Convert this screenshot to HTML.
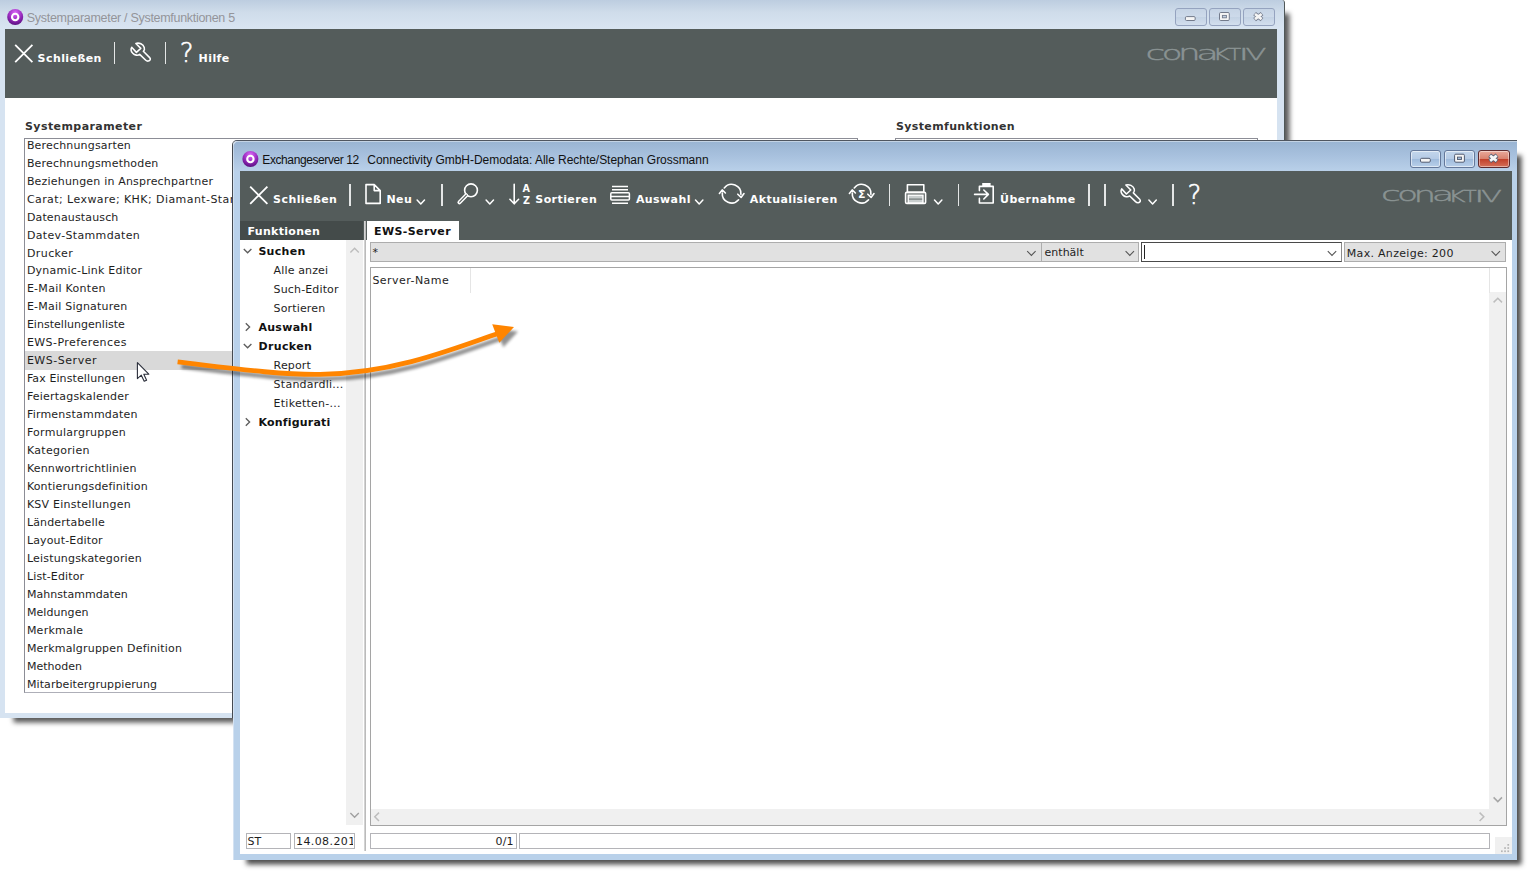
<!DOCTYPE html>
<html lang="de"><head><meta charset="utf-8"><title>Systemparameter / Systemfunktionen</title>
<style>
*{box-sizing:border-box;margin:0;padding:0}
html,body{width:1532px;height:875px;overflow:hidden;background:#fff}
body{position:relative;font-family:"DejaVu Sans","Liberation Sans",sans-serif;font-size:11px;color:#1e1e1e}
.a{position:absolute}
.tb{position:absolute;background:#545c5b}
.ttl{position:absolute;font-family:"Liberation Sans",sans-serif;font-size:12px;white-space:pre;line-height:14px}
.bt{position:absolute;color:#fff;font-weight:bold;font-size:11px;letter-spacing:.42px;white-space:nowrap;line-height:14px}
.sep{position:absolute;width:1.4px;height:22px;background:#e4e6e6}
.li{position:absolute;left:27px;white-space:nowrap;line-height:18px;height:18px;letter-spacing:.14px}
.t{position:absolute;white-space:nowrap;line-height:14px;letter-spacing:.14px}
.b{font-weight:bold;letter-spacing:.3px}
svg{position:absolute;left:0;top:0;overflow:visible}
.ic{fill:none;stroke:#fff;stroke-width:1.6;stroke-linecap:round;stroke-linejoin:round}
.cb{position:absolute;top:242px;height:20px;background:#e1e1e1;border:1px solid #adadad}
.wb{position:absolute;border:1px solid #8b9bb5;border-radius:3px}
</style></head><body>
<!-- window 1 shadow -->
<div class="a" style="left:8px;top:8px;width:1276.9px;height:709.5px;box-shadow:4.5px 4.5px 5px rgba(0,0,0,.66)"></div>
<div id="w1" class="a" style="left:0;top:0;width:1285.4px;height:718px;background:linear-gradient(#bdcde0 0px,#cfdcea 12px,#d9e5f2 29px,#d6e3f1 30px);border-radius:0 3px 0 0;border-right:1.4px solid #4f5757">
<div class="a" style="left:5px;top:98px;width:1272px;height:614.5px;background:#fff"></div>
<div class="tb" style="left:5px;top:29.1px;width:1272px;height:69.3px"></div>
<svg width="30" height="30"><defs><radialGradient id="pg" cx="50%" cy="25%" r="75%"><stop offset="0" stop-color="#dc6cf8"/><stop offset=".55" stop-color="#9a2cc0"/><stop offset="1" stop-color="#5a0f80"/></radialGradient></defs><circle cx="15.2" cy="17" r="8" fill="url(#pg)"/><circle cx="15.2" cy="17" r="3.2" fill="none" stroke="#fff" stroke-width="2.1"/></svg>
<div class="ttl" style="left:26.8px;top:10.8px;color:#94959a;font-size:12.5px;letter-spacing:-.3px">Systemparameter / Systemfunktionen 5</div>
<div class="wb" style="left:1175px;top:8px;width:31.5px;height:17.5px;border-color:#95a3bf;background:linear-gradient(#c6d4e5,#cddaea 50%,#c3d2e4 51%,#d3dfee)"></div>
<div class="wb" style="left:1209px;top:8px;width:31.5px;height:17.5px;border-color:#95a3bf;background:linear-gradient(#c6d4e5,#cddaea 50%,#c3d2e4 51%,#d3dfee)"></div>
<div class="wb" style="left:1243px;top:8px;width:31.5px;height:17.5px;border-color:#95a3bf;background:linear-gradient(#c6d4e5,#cddaea 50%,#c3d2e4 51%,#d3dfee)"></div>
<svg width="1300" height="100"><g transform="translate(0,0)"><rect x="1185.4" y="16.6" width="9.8" height="3.9" rx="1.2" fill="#f5f5f5" stroke="#737b8c" stroke-width="1"/><rect x="1219.5" y="12.5" width="9.8" height="8" rx="1.2" fill="#f5f5f5" stroke="#737b8c" stroke-width="1"/><rect x="1222.4" y="15.4" width="4" height="2.4" fill="#c3d1e3" stroke="#737b8c" stroke-width=".9"/><path d="M1254.6,13.6 L1262,19.6 M1262,13.6 L1254.6,19.6" stroke="#737b8c" stroke-width="4.4" stroke-linecap="butt"/><path d="M1255,14 L1261.6,19.2 M1261.6,14 L1255,19.2" stroke="#f5f5f5" stroke-width="2.8" stroke-linecap="butt"/></g><path class="ic" style="stroke-width:1.8;stroke-linecap:butt" transform="translate(-235,-141.7)" d="M250.2,186.6 L267.4,203.8 M267.4,186.6 L250.2,203.8"/><path class="ic" transform="translate(-990,-141.6) translate(1130.6,193.6) scale(.91) translate(-1130.6,-193.6)" style="stroke-width:1.7" d="M1125.4,184.2 C1129,183 1133.5,185 1134.6,188.6 C1135.2,190.5 1134.6,192 1133.6,192.8 L1140.6,199.8 C1142,201.2 1141.2,203.4 1139,203.6 C1137.8,203.7 1136.8,203.2 1136,202.4 L1129.6,196.2 C1127.5,197.8 1124,197.2 1122,195 C1120,192.8 1119.6,190.5 1120.8,188.4 L1126,194 L1130.8,189.6 Z"/><g aria-label="conaKTIV"><text transform="translate(1145.40,59.51) scale(1.846,1)" style="font-family:'DejaVu Sans Light','DejaVu Sans',sans-serif;font-weight:200;font-size:19.50px;fill:#8a9393;stroke:#8a9393;stroke-width:.55;vector-effect:non-scaling-stroke">c</text><text transform="translate(1161.86,59.51) scale(1.738,1)" style="font-family:'DejaVu Sans Light','DejaVu Sans',sans-serif;font-weight:200;font-size:19.50px;fill:#8a9393;stroke:#8a9393;stroke-width:.55;vector-effect:non-scaling-stroke">o</text><text transform="translate(1177.92,60.00) scale(1.758,1)" style="font-family:'DejaVu Sans Light','DejaVu Sans',sans-serif;font-weight:200;font-size:20.35px;fill:#8a9393;stroke:#8a9393;stroke-width:.55;vector-effect:non-scaling-stroke">n</text><text transform="translate(1196.33,59.51) scale(1.894,1)" style="font-family:'DejaVu Sans Light','DejaVu Sans',sans-serif;font-weight:200;font-size:19.50px;fill:#8a9393;stroke:#8a9393;stroke-width:.55;vector-effect:non-scaling-stroke">a</text><text transform="translate(1212.62,60.00) scale(1.714,1)" style="font-family:'DejaVu Sans Light','DejaVu Sans',sans-serif;font-weight:200;font-size:15.60px;fill:#8a9393;stroke:#8a9393;stroke-width:.55;vector-effect:non-scaling-stroke">K</text><text transform="translate(1228.49,60.00) scale(1.315,1)" style="font-family:'DejaVu Sans Light','DejaVu Sans',sans-serif;font-weight:200;font-size:15.60px;fill:#8a9393;stroke:#8a9393;stroke-width:.55;vector-effect:non-scaling-stroke">T</text><text transform="translate(1238.60,60.00) scale(2.308,1)" style="font-family:'DejaVu Sans Light','DejaVu Sans',sans-serif;font-weight:200;font-size:15.60px;fill:#8a9393;stroke:#8a9393;stroke-width:.55;vector-effect:non-scaling-stroke">I</text><text transform="translate(1245.44,60.00) scale(1.959,1)" style="font-family:'DejaVu Sans Light','DejaVu Sans',sans-serif;font-weight:200;font-size:15.60px;fill:#8a9393;stroke:#8a9393;stroke-width:.55;vector-effect:non-scaling-stroke">V</text></g></svg>
<div class="bt" style="left:37.6px;top:51.8px">Schließen</div>
<div class="sep" style="left:113.8px;top:42px"></div><div class="sep" style="left:165px;top:42px"></div>
<div class="a" style="left:179.8px;top:36.1px;color:#fff;font-family:'DejaVu Sans Light','DejaVu Sans',sans-serif;font-weight:200;font-size:26px;line-height:34px;-webkit-text-stroke:.55px #fff">?</div>
<div class="bt" style="left:198.6px;top:51.8px">Hilfe</div>
<div class="t b" style="left:25px;top:119.7px;color:#333;letter-spacing:.42px">Systemparameter</div>
<div class="t b" style="left:896px;top:119.7px;color:#333;letter-spacing:.36px">Systemfunktionen</div>
<div class="a" style="left:24px;top:138px;width:833.5px;height:555px;border:1px solid #8c8d96;border-bottom-color:#aeafb8;background:#fff;overflow:hidden">
<div class="a" style="left:0;top:211.8px;width:832px;height:19px;background:#d9d9d9"></div>
<div class="li" style="left:1.9px;top:-2.30px;letter-spacing:0.173px">Berechnungsarten</div>
<div class="li" style="left:1.9px;top:15.67px;letter-spacing:0.179px">Berechnungsmethoden</div>
<div class="li" style="left:1.9px;top:33.64px;letter-spacing:0.185px">Beziehungen in Ansprechpartner</div>
<div class="li" style="left:1.9px;top:51.61px;letter-spacing:0.43px">Carat; Lexware; KHK; Diamant-Stammdaten</div>
<div class="li" style="left:1.9px;top:69.58px;letter-spacing:0.148px">Datenaustausch</div>
<div class="li" style="left:1.9px;top:87.55px;letter-spacing:0.347px">Datev-Stammdaten</div>
<div class="li" style="left:1.9px;top:105.52px;letter-spacing:0.424px">Drucker</div>
<div class="li" style="left:1.9px;top:123.49px;letter-spacing:0.223px">Dynamic-Link Editor</div>
<div class="li" style="left:1.9px;top:141.46px;letter-spacing:0.281px">E-Mail Konten</div>
<div class="li" style="left:1.9px;top:159.43px;letter-spacing:0.221px">E-Mail Signaturen</div>
<div class="li" style="left:1.9px;top:177.40px;letter-spacing:0.028px">Einstellungenliste</div>
<div class="li" style="left:1.9px;top:195.37px;letter-spacing:0.433px">EWS-Preferences</div>
<div class="li" style="left:1.9px;top:213.34px;letter-spacing:0.53px">EWS-Server</div>
<div class="li" style="left:1.9px;top:231.31px;letter-spacing:0.11px">Fax Einstellungen</div>
<div class="li" style="left:1.9px;top:249.28px;letter-spacing:0.208px">Feiertagskalender</div>
<div class="li" style="left:1.9px;top:267.25px;letter-spacing:0.213px">Firmenstammdaten</div>
<div class="li" style="left:1.9px;top:285.22px;letter-spacing:0.276px">Formulargruppen</div>
<div class="li" style="left:1.9px;top:303.19px;letter-spacing:0.306px">Kategorien</div>
<div class="li" style="left:1.9px;top:321.16px;letter-spacing:0.157px">Kennwortrichtlinien</div>
<div class="li" style="left:1.9px;top:339.13px;letter-spacing:0.165px">Kontierungsdefinition</div>
<div class="li" style="left:1.9px;top:357.10px;letter-spacing:0.246px">KSV Einstellungen</div>
<div class="li" style="left:1.9px;top:375.07px;letter-spacing:0.165px">Ländertabelle</div>
<div class="li" style="left:1.9px;top:393.04px;letter-spacing:0.148px">Layout-Editor</div>
<div class="li" style="left:1.9px;top:411.01px;letter-spacing:0.19px">Leistungskategorien</div>
<div class="li" style="left:1.9px;top:428.98px;letter-spacing:0.15px">List-Editor</div>
<div class="li" style="left:1.9px;top:446.95px;letter-spacing:0.055px">Mahnstammdaten</div>
<div class="li" style="left:1.9px;top:464.92px;letter-spacing:0.077px">Meldungen</div>
<div class="li" style="left:1.9px;top:482.89px;letter-spacing:0.24px">Merkmale</div>
<div class="li" style="left:1.9px;top:500.86px;letter-spacing:0.186px">Merkmalgruppen Definition</div>
<div class="li" style="left:1.9px;top:518.83px;letter-spacing:0.014px">Methoden</div>
<div class="li" style="left:1.9px;top:536.80px;letter-spacing:0.097px">Mitarbeitergruppierung</div>
</div>
<div class="a" style="left:895px;top:138px;width:362.5px;height:555px;border:1px solid #8c8d96;border-bottom-color:#aeafb8;background:#fff"></div>
</div>
<svg width="200" height="400"><path d="M137.4,362.6 L137.4,378.6 L141.3,375.2 L144.2,381.2 L146.6,380.2 L143.8,374.2 L148.8,374.2 Z" fill="#fff" stroke="#2a2e3a" stroke-width="1.1" stroke-linejoin="round"/></svg>
<div class="a" style="left:241px;top:150px;width:1275.9px;height:709.6px;box-shadow:4.5px 4.5px 5px rgba(0,0,0,.7)"></div>
<div class="a" style="left:232.3px;top:139.7px;width:1285.1px;height:578.4px;border-left:1.1px solid #454a50;border-top:1.1px solid #4f5660;border-radius:5px 0 0 0"></div>
<div id="w2" class="a" style="left:233.4px;top:140.8px;width:1284px;height:719.3px;background:linear-gradient(#99b4d2 0px,#a8c1de 15px,#b9d0e9 30px,#b9d1ea 31px);border-radius:4.5px 0 0 0;box-shadow:inset .7px .8px 0 rgba(255,255,255,.55)"></div>
<div class="a" style="left:240.4px;top:240px;width:1271.6px;height:614px;background:#fff"></div>
<div class="tb" style="left:240.4px;top:170.8px;width:1271.6px;height:69.4px"></div>
<svg width="300" height="200"><circle cx="250.4" cy="159" r="8" fill="url(#pg)"/><circle cx="250.4" cy="159" r="3.2" fill="none" stroke="#fff" stroke-width="2.1"/></svg>
<div class="ttl" style="left:262.3px;top:152.9px;color:#111;font-size:12px;letter-spacing:-.4px">Exchangeserver 12</div><div class="ttl" style="left:367.3px;top:152.9px;color:#111;font-size:12px;letter-spacing:-.04px">Connectivity GmbH-Demodata<span>:</span> Alle Rechte/Stephan Grossmann</div>
<div class="wb" style="left:1410.2px;top:150px;width:31.3px;height:17.5px;border-color:#64789a;background:linear-gradient(#c3d6ec,#b5cbe6 48%,#9fbbdc 52%,#b9d0ea);box-shadow:inset 0 0 0 1px rgba(255,255,255,.55)"></div>
<div class="wb" style="left:1444.2px;top:150px;width:31.3px;height:17.5px;border-color:#64789a;background:linear-gradient(#c3d6ec,#b5cbe6 48%,#9fbbdc 52%,#b9d0ea);box-shadow:inset 0 0 0 1px rgba(255,255,255,.55)"></div>
<div class="wb" style="left:1478.2px;top:150px;width:31.4px;height:17.5px;border-color:#5d2a2e;background:linear-gradient(#e9a99b,#d9826f 48%,#c2402a 52%,#d4705a);box-shadow:inset 0 0 0 1px rgba(255,255,255,.45)"></div>
<svg width="1532" height="300"><g transform="translate(235.1,141.7)"><rect x="1185.4" y="16.6" width="9.8" height="3.9" rx="1.2" fill="#f5f5f5" stroke="#505a70" stroke-width="1"/><rect x="1219.5" y="12.5" width="9.8" height="8" rx="1.2" fill="#f5f5f5" stroke="#505a70" stroke-width="1"/><rect x="1222.4" y="15.4" width="4" height="2.4" fill="#a4bedd" stroke="#505a70" stroke-width=".9"/><path d="M1254.6,13.6 L1262,19.6 M1262,13.6 L1254.6,19.6" stroke="#505a70" stroke-width="4.4" stroke-linecap="butt"/><path d="M1255,14 L1261.6,19.2 M1261.6,14 L1255,19.2" stroke="#f5f5f5" stroke-width="2.8" stroke-linecap="butt"/></g><path class="ic" style="stroke-width:1.8;stroke-linecap:butt" transform="translate(0,0)" d="M250.2,186.6 L267.4,203.8 M267.4,186.6 L250.2,203.8"/><path class="ic" d="M366,184.6 h8.2 l6,6 v12.8 h-14.2 z M374.2,184.6 v6 h6"/><path class="ic" style="stroke-width:1.5" d="M417.1,200.0 l3.7,3.9 l3.7,-3.9"/><circle class="ic" cx="471" cy="190.3" r="6.4"/><path d="M466.2,195.4 L459.4,202.4" stroke="#fff" stroke-width="4" stroke-linecap="round" fill="none"/><path d="M466.4,195.2 L459.6,202.2" stroke="#545c5b" stroke-width="1.1" stroke-linecap="round" fill="none"/><path class="ic" style="stroke-width:1.5" d="M486.1,200.0 l3.7,3.9 l3.7,-3.9"/><path class="ic" d="M514.2,184.2 V203.6 M509.9,199.3 L514.2,203.8 L518.6,199.3"/><text x="522.6" y="192.4" style="font:bold 9.6px 'DejaVu Sans',sans-serif;fill:#fff">A</text><text x="523" y="203.6" style="font:bold 9.6px 'DejaVu Sans',sans-serif;fill:#fff">Z</text><path class="ic" style="stroke-linecap:butt;stroke-width:1.5" d="M612,186.6 H628 M612,189.7 H628 M612,203.2 H628 M610.6,196.4 H629.4"/><rect class="ic" style="stroke-width:1.5" x="610.8" y="192.8" width="18.6" height="7.2" rx="1"/><path class="ic" style="stroke-width:1.5" d="M695.5,200.0 l3.7,3.9 l3.7,-3.9"/><g class="ic" transform="translate(731.6,193.8)"><path d="M-7.3,-5.8 A9.3,9.3 0 0 1 9.3,0.6"/><path d="M6.2,0.4 L9.5,3.6 L12.4,-0.2"/><path d="M7,6 A9.3,9.3 0 0 1 -9.3,-0.8"/><path d="M-12.2,-0.4 L-9.4,-3.9 L-6.2,-0.8"/></g><g class="ic" transform="translate(861.6,193.8)"><path d="M-7.3,-5.8 A9.3,9.3 0 0 1 9.3,0.6"/><path d="M6.2,0.4 L9.5,3.6 L12.4,-0.2"/><path d="M7,6 A9.3,9.3 0 0 1 -9.3,-0.8"/><path d="M-12.2,-0.4 L-9.4,-3.9 L-6.2,-0.8"/></g><text x="857.9" y="197.9" style="font:bold 11px 'DejaVu Sans',sans-serif;fill:#fff">Σ</text><rect class="ic" x="907.4" y="184.8" width="16.4" height="7.6"/><rect class="ic" x="905.6" y="192.4" width="20" height="11" rx="1.2"/><rect x="908.2" y="195.2" width="14.8" height="7.8" fill="#c9cfcf" stroke="#fff" stroke-width="1.4"/><path d="M909,199.1 H922.2" stroke="#6a7271" stroke-width="1.1"/><path class="ic" style="stroke-width:1.5" d="M934.5,200.0 l3.7,3.9 l3.7,-3.9"/><path class="ic" d="M979.4,190.6 V186.4 H993.2 V203 H979.4 V198.4"/><path d="M982.2,184.5 H990.6" stroke="#fff" stroke-width="3" fill="none"/><path class="ic" d="M974.6,194.4 H988 M983.8,190 L988.4,194.4 L983.8,199"/><path class="ic" transform="translate(0,0) translate(1130.6,193.6) scale(.91) translate(-1130.6,-193.6)" style="stroke-width:1.7" d="M1125.4,184.2 C1129,183 1133.5,185 1134.6,188.6 C1135.2,190.5 1134.6,192 1133.6,192.8 L1140.6,199.8 C1142,201.2 1141.2,203.4 1139,203.6 C1137.8,203.7 1136.8,203.2 1136,202.4 L1129.6,196.2 C1127.5,197.8 1124,197.2 1122,195 C1120,192.8 1119.6,190.5 1120.8,188.4 L1126,194 L1130.8,189.6 Z"/><path class="ic" style="stroke-width:1.5" d="M1148.9,200.0 l3.7,3.9 l3.7,-3.9"/><g aria-label="conaKTIV"><text transform="translate(1380.90,201.11) scale(1.846,1)" style="font-family:'DejaVu Sans Light','DejaVu Sans',sans-serif;font-weight:200;font-size:19.50px;fill:#8a9393;stroke:#8a9393;stroke-width:.55;vector-effect:non-scaling-stroke">c</text><text transform="translate(1397.36,201.11) scale(1.738,1)" style="font-family:'DejaVu Sans Light','DejaVu Sans',sans-serif;font-weight:200;font-size:19.50px;fill:#8a9393;stroke:#8a9393;stroke-width:.55;vector-effect:non-scaling-stroke">o</text><text transform="translate(1413.42,201.60) scale(1.758,1)" style="font-family:'DejaVu Sans Light','DejaVu Sans',sans-serif;font-weight:200;font-size:20.35px;fill:#8a9393;stroke:#8a9393;stroke-width:.55;vector-effect:non-scaling-stroke">n</text><text transform="translate(1431.83,201.11) scale(1.894,1)" style="font-family:'DejaVu Sans Light','DejaVu Sans',sans-serif;font-weight:200;font-size:19.50px;fill:#8a9393;stroke:#8a9393;stroke-width:.55;vector-effect:non-scaling-stroke">a</text><text transform="translate(1448.12,201.60) scale(1.714,1)" style="font-family:'DejaVu Sans Light','DejaVu Sans',sans-serif;font-weight:200;font-size:15.60px;fill:#8a9393;stroke:#8a9393;stroke-width:.55;vector-effect:non-scaling-stroke">K</text><text transform="translate(1463.99,201.60) scale(1.315,1)" style="font-family:'DejaVu Sans Light','DejaVu Sans',sans-serif;font-weight:200;font-size:15.60px;fill:#8a9393;stroke:#8a9393;stroke-width:.55;vector-effect:non-scaling-stroke">T</text><text transform="translate(1474.10,201.60) scale(2.308,1)" style="font-family:'DejaVu Sans Light','DejaVu Sans',sans-serif;font-weight:200;font-size:15.60px;fill:#8a9393;stroke:#8a9393;stroke-width:.55;vector-effect:non-scaling-stroke">I</text><text transform="translate(1480.94,201.60) scale(1.959,1)" style="font-family:'DejaVu Sans Light','DejaVu Sans',sans-serif;font-weight:200;font-size:15.60px;fill:#8a9393;stroke:#8a9393;stroke-width:.55;vector-effect:non-scaling-stroke">V</text></g></svg>
<div class="sep" style="left:349.2px;top:183.5px"></div><div class="sep" style="left:441.4px;top:183.5px"></div><div class="sep" style="left:888.9px;top:183.5px"></div><div class="sep" style="left:957.9px;top:183.5px"></div><div class="sep" style="left:1088.4px;top:183.5px"></div><div class="sep" style="left:1104.3px;top:183.5px"></div><div class="sep" style="left:1172.3px;top:183.5px"></div>
<div class="bt" style="left:273.1px;top:192.5px">Schließen</div><div class="bt" style="left:386.40000000000003px;top:192.5px">Neu</div><div class="bt" style="left:535.3000000000001px;top:192.5px">Sortieren</div><div class="bt" style="left:635.9px;top:192.5px">Auswahl</div><div class="bt" style="left:749.8000000000001px;top:192.5px">Aktualisieren</div><div class="bt" style="left:1000.1px;top:192.5px">Übernahme</div>
<div class="a" style="left:1187.4px;top:177.8px;color:#fff;font-family:'DejaVu Sans Light','DejaVu Sans',sans-serif;font-weight:200;font-size:26px;line-height:34px;-webkit-text-stroke:.55px #fff">?</div>
<div class="a" style="left:240.4px;top:221px;width:123px;height:19.3px;background:#444b4a"></div>
<div class="bt" style="left:247.6px;top:225.4px;letter-spacing:.3px">Funktionen</div>
<div class="a" style="left:364.4px;top:221px;width:2px;height:630px;background:linear-gradient(90deg,#ececec,#b4b4b4 55%,#c4c4c4)"></div>
<div class="a" style="left:367px;top:221px;width:91.8px;height:20px;background:#fff"></div>
<div class="t b" style="left:374px;top:225.4px;color:#111;letter-spacing:.4px">EWS-Server</div>
<div class="a" style="left:346.4px;top:240.4px;width:16.6px;height:584.6px;background:#f0f0f0"></div>
<div class="t b" style="left:258.4px;top:245.4px;color:#111;letter-spacing:0.3px">Suchen</div><div class="t" style="left:273.6px;top:264.4px;letter-spacing:0.14px">Alle anzei</div><div class="t" style="left:273.6px;top:283.4px;letter-spacing:0.14px">Such-Editor</div><div class="t" style="left:273.6px;top:302.4px;letter-spacing:0.14px">Sortieren</div><div class="t b" style="left:258.4px;top:321.4px;color:#111;letter-spacing:0.3px">Auswahl</div><div class="t b" style="left:258.4px;top:340.4px;color:#111;letter-spacing:0.38px">Drucken</div><div class="t" style="left:273.6px;top:359.4px;letter-spacing:0.14px">Report</div><div class="t" style="left:273.6px;top:378.4px;letter-spacing:0.25px">Standardli...</div><div class="t" style="left:273.6px;top:397.4px;letter-spacing:0.25px">Etiketten-...</div><div class="t b" style="left:258.4px;top:416.4px;color:#111;letter-spacing:0.2px">Konfigurati</div>
<svg width="400" height="875" style="stroke:#5e5e5e;stroke-width:1.35;fill:none"><path d="M243.8,249.0 l3.8,3.8 l3.8,-3.8"/><path d="M245.8,323.2 l3.8,3.8 l-3.8,3.8"/><path d="M243.8,344.0 l3.8,3.8 l3.8,-3.8"/><path d="M245.8,418.2 l3.8,3.8 l-3.8,3.8"/><path d="M350.4,252.4 l4.2,-4.2 l4.2,4.2" style="stroke:#bdbdbd;stroke-width:1.4"/><path d="M350.4,813 l4.2,4.2 l4.2,-4.2" style="stroke:#a0a0a0;stroke-width:1.4"/></svg>
<div class="cb" style="left:369.6px;width:672px"></div><div class="cb" style="left:1040.6px;width:98.6px"></div><div class="a" style="left:1141.4px;top:241.8px;width:200.4px;height:20.6px;background:#fff;border:1.5px solid #4a4a4a;border-right-color:#8a8a8a"></div><div class="cb" style="left:1343.8px;width:162.4px"></div>
<div class="t" style="left:372.6px;top:245.8px">*</div><div class="t" style="left:1044.6px;top:246px;letter-spacing:0">enthält</div><div class="t" style="left:1346.8px;top:246.6px;letter-spacing:.3px">Max. Anzeige: 200</div>
<div class="a" style="left:1144px;top:245px;width:1px;height:14px;background:#222"></div>
<svg width="1532" height="300" style="stroke:#555;stroke-width:1.1;fill:none"><path d="M1027.2,251.2 l4.2,4.2 l4.2,-4.2"/><path d="M1125.6,251.2 l4.2,4.2 l4.2,-4.2"/><path d="M1327.8,251.2 l4.2,4.2 l4.2,-4.2"/><path d="M1491.6,251.2 l4.2,4.2 l4.2,-4.2"/></svg>
<div class="a" style="left:369.6px;top:267px;width:1137.6px;height:559px;border:1px solid #a5a5a5;background:#fff"><div class="a" style="left:1118.8px;top:24px;width:16.8px;height:517px;background:#f0f0f0"></div><div class="a" style="left:0;top:541px;width:1135.6px;height:16px;background:#f0f0f0"></div><div class="a" style="left:99.6px;top:0;width:1px;height:24.6px;background:#e5e5e5"></div><div class="a" style="left:1118.4px;top:0;width:1px;height:24.6px;background:#e5e5e5"></div></div>
<div class="t" style="left:372.4px;top:274.4px;letter-spacing:.45px">Server-Name</div>
<svg width="1532" height="875" style="stroke:#bdbdbd;stroke-width:1.5;fill:none"><path d="M1493.6,302.4 l4.2,-4.2 l4.2,4.2"/><path d="M1493.6,797.4 l4.2,4.2 l4.2,-4.2" style="stroke:#a6a6a6"/><path d="M379,812.6 l-4.2,4.2 l4.2,4.2"/><path d="M1479.6,812.6 l4.2,4.2 l-4.2,4.2"/></svg>
<div class="a" style="left:246px;top:833px;width:45px;height:16px;border:1px solid #b4b4b8;background:#fff"></div><div class="a" style="left:294px;top:833px;width:60.6px;height:16px;border:1px solid #b4b4b8;background:#fff;overflow:hidden"></div><div class="a" style="left:369.6px;top:833px;width:147px;height:16px;border:1px solid #b4b4b8;background:#fff"></div><div class="a" style="left:519.4px;top:833px;width:970.6px;height:16px;border:1px solid #b4b4b8;background:#fff"></div>
<div class="t" style="left:247.4px;top:835.4px">ST</div><div class="t" style="left:296px;top:835.4px;width:57.4px;overflow:hidden;letter-spacing:.4px">14.08.2015</div><div class="t" style="left:495.6px;top:835.4px">0/1</div>
<div class="a" style="left:1495px;top:837.4px;width:17px;height:16.8px;background:#f0f0f0"></div><svg width="1532" height="875" style="fill:#b5b5b5"><rect x="1507.4" y="844" width="1.7" height="1.7"/><rect x="1507.4" y="847.2" width="1.7" height="1.7"/><rect x="1504.2" y="847.2" width="1.7" height="1.7"/><rect x="1507.4" y="850.4" width="1.7" height="1.7"/><rect x="1504.2" y="850.4" width="1.7" height="1.7"/><rect x="1501" y="850.4" width="1.7" height="1.7"/></svg>
<svg width="1532" height="875"><defs><filter id="bl" x="-10%" y="-50%" width="120%" height="200%"><feGaussianBlur stdDeviation="1.5"/></filter></defs><g transform="translate(4,4.6)" opacity=".43" filter="url(#bl)"><path d="M177.6,361.9 C230,368 280,375 320,374.4 C390,373.4 446,352 498.5,333.2" fill="none" stroke="#000" stroke-width="4.6"/><path d="M514,327 L492.2,324.2 L499.3,342.7 Z" fill="#000"/></g><path d="M177.6,361.9 C230,368 280,375 320,374.4 C390,373.4 446,352 498.5,333.2" fill="none" stroke="#ff8500" stroke-width="4.8"/><path d="M514,327 L492.2,324.2 L499.3,342.7 Z" fill="#ff8500"/></svg>
</body></html>
